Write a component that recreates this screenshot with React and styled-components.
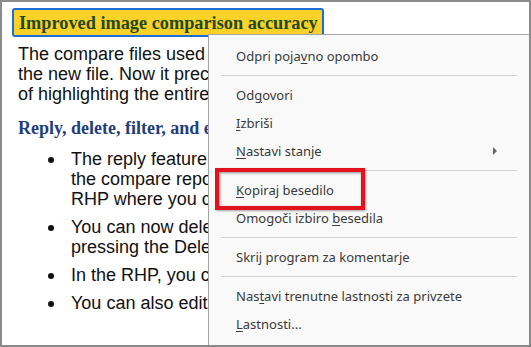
import styled, { createGlobalStyle } from "styled-components";

const GlobalStyle = createGlobalStyle`
    html, body {
        margin: 0;
        padding: 0;
        background: #ffffff;
    }
`;

const Frame = styled.div`
    position: relative;
    width: 531px;
    height: 347px;
    box-sizing: border-box;
    border: 2px solid #8a8a8a;
    background: #ffffff;
    overflow: hidden;
`;

const Page = styled.div`
    padding: 6px 0 0 10px;
    font-family: "Liberation Sans", Arial, sans-serif;
    font-size: 18px;
    line-height: 20px;
    color: #111;
    white-space: nowrap;
`;

const HeadingBox = styled.div`
    width: 312px;
    height: 29px;
    box-sizing: border-box;
    border: 2px solid #1c6fd8;
    border-radius: 3px;
    background: #fcd12a;
    padding: 2px 0 0 5px;
    font-family: "Liberation Serif", "Times New Roman", serif;
    font-weight: bold;
    font-size: 18.3px;
    line-height: 22px;
    color: #1f4a1c;
`;

const Para = styled.p`
    margin: 7px 0 0 6px;
`;

const SubHeading = styled.h3`
    margin: 14px 0 0 6px;
    font-family: "Liberation Serif", "Times New Roman", serif;
    font-weight: bold;
    font-size: 18px;
    line-height: 20px;
    color: #1f3f7c;
`;

const List = styled.ul`
    list-style: none;
    margin: 11px 0 0 0;
    padding: 0 0 0 36px;
    display: flex;
    flex-direction: column;
    gap: 8px;
`;

const Item = styled.li`
    display: flex;
    gap: 17px;
`;

const Bullet = styled.span`
    width: 6px;
    flex: none;
    &::before {
        content: "";
        display: block;
        width: 6px;
        height: 6px;
        margin-top: 8px;
        border-radius: 50%;
        background: #111;
    }
`;

const Menu = styled.div`
    position: absolute;
    left: 206px;
    top: 32px;
    right: 0;
    bottom: 0;
    box-sizing: border-box;
    padding-top: 7px;
    background: #f9f9f9;
    border-left: 1px solid #a3a3a3;
    border-top: 1px solid #a3a3a3;
    font-family: "Noto Sans", "Open Sans", sans-serif;
    font-size: 13px;
    color: #3a3a3a;
`;

const MenuItem = styled.div`
    position: relative;
    height: 28px;
    line-height: 28px;
    padding-left: 27px;
    u {
        text-decoration: underline;
        text-underline-offset: 2px;
    }
`;

const Separator = styled.div`
    height: 11px;
    display: flex;
    align-items: center;
    padding: 0 12px;
    &::before {
        content: "";
        flex: 1;
        height: 1px;
        background: #d2d2d2;
    }
`;

const SubArrow = styled.span`
    position: absolute;
    right: 32px;
    top: 10px;
    width: 0;
    height: 0;
    border-top: 4px solid transparent;
    border-bottom: 4px solid transparent;
    border-left: 4px solid #6a6a6a;
`;

const Highlight = styled.div`
    position: absolute;
    left: 6px;
    top: 133px;
    width: 150px;
    height: 42px;
    box-sizing: border-box;
    border: 4px solid #e3111b;
    box-shadow: inset 1px 1px 3px rgba(0, 0, 0, 0.45), 1px 1px 2px rgba(0, 0, 0, 0.35);
    pointer-events: none;
`;

export default function App() {
    return (
        <>
            <GlobalStyle />
            <Frame>
                <Page>
                    <HeadingBox>Improved image comparison accuracy</HeadingBox>
                    <Para>
                        The compare files used to highlight a whole page for minor changes in<br />
                        the new file. Now it precisely highlights only the changed text instead<br />
                        of highlighting the entire page or paragraph.
                    </Para>
                    <SubHeading>Reply, delete, filter, and edit comments in the compare report</SubHeading>
                    <List>
                        <Item>
                            <Bullet />
                            <div>
                                The reply feature lets you respond to comments in<br />
                                the compare report. Select a comment to open the<br />
                                RHP where you can type your reply.
                            </div>
                        </Item>
                        <Item>
                            <Bullet />
                            <div>
                                You can now delete a comment by selecting it and<br />
                                pressing the Delete key.
                            </div>
                        </Item>
                        <Item>
                            <Bullet />
                            <div>In the RHP, you can filter comments by type.</div>
                        </Item>
                        <Item>
                            <Bullet />
                            <div>You can also edit the text of a comment.</div>
                        </Item>
                    </List>
                </Page>
                <Menu>
                    <MenuItem>Odpri poja<u>v</u>no opombo</MenuItem>
                    <Separator />
                    <MenuItem>Od<u>g</u>ovori</MenuItem>
                    <MenuItem><u>I</u>zbriši</MenuItem>
                    <MenuItem>
                        <u>N</u>astavi stanje
                        <SubArrow />
                    </MenuItem>
                    <Separator />
                    <MenuItem><u>K</u>opiraj besedilo</MenuItem>
                    <MenuItem>Omogoči izbiro <u>b</u>esedila</MenuItem>
                    <Separator />
                    <MenuItem>Skrij program za komentarje</MenuItem>
                    <Separator />
                    <MenuItem>Nas<u>t</u>avi trenutne lastnosti za privzete</MenuItem>
                    <MenuItem><u>L</u>astnosti...</MenuItem>
                    <Highlight />
                </Menu>
            </Frame>
        </>
    );
}
